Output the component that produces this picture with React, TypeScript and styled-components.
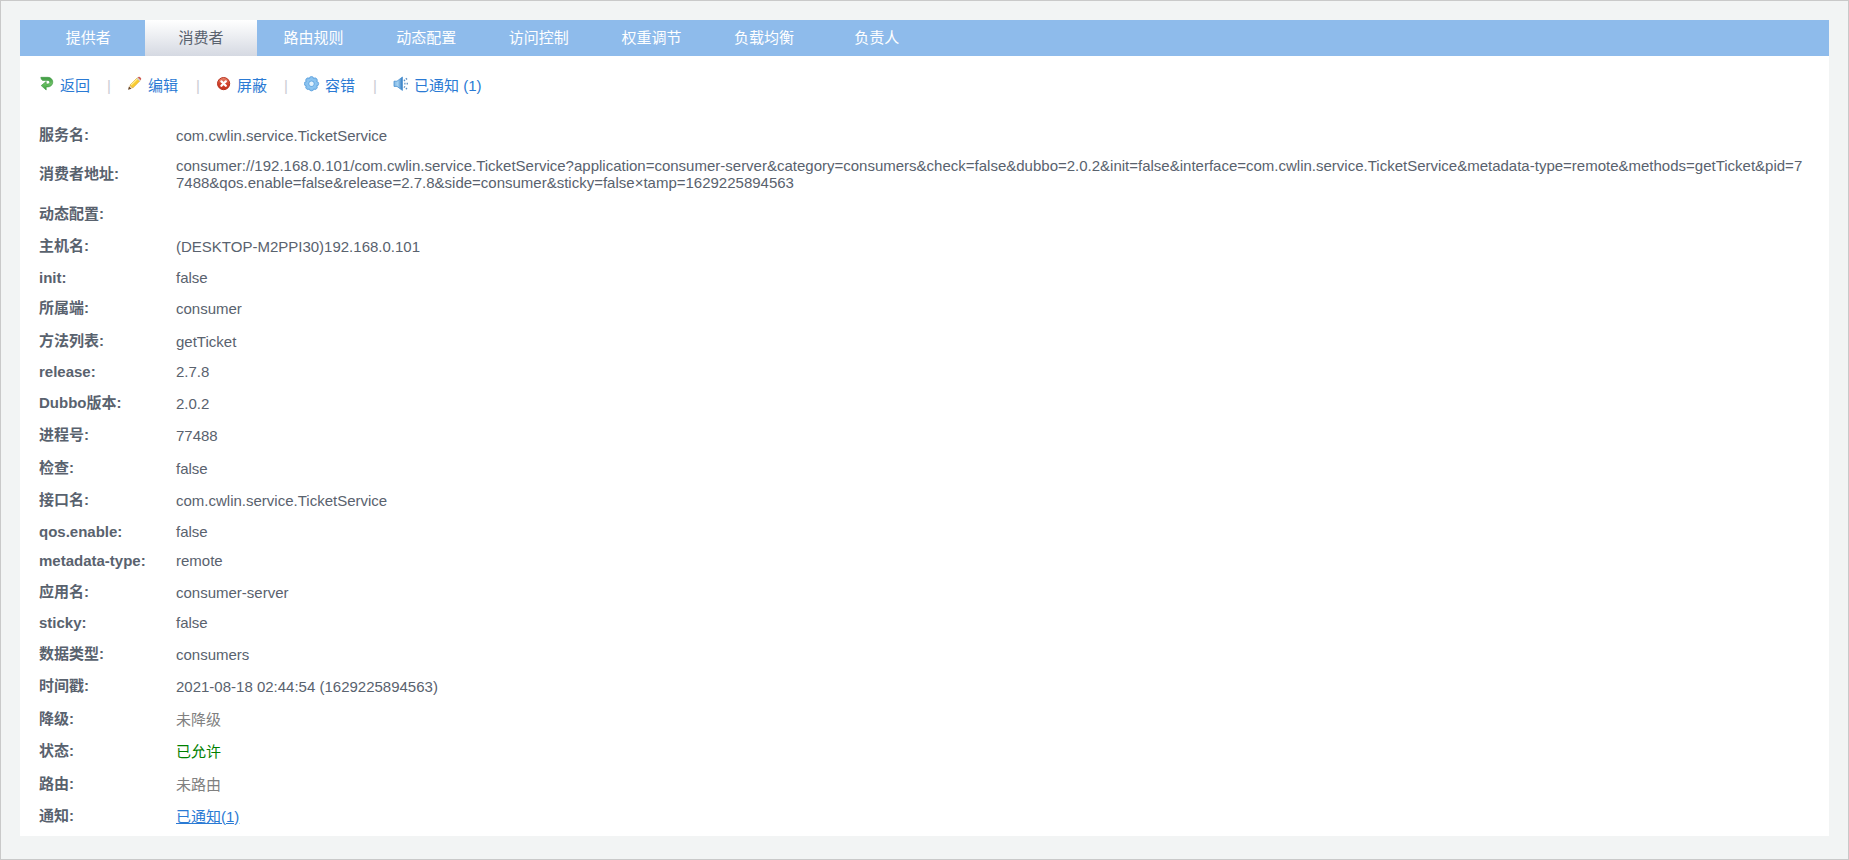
import React from "react";
import styled, { createGlobalStyle, css } from "styled-components";

const GlobalStyle = createGlobalStyle`
  *, *::before, *::after { box-sizing: border-box; }
  body {
    margin: 0;
    background: #f2f4f4;
    color: #59626e;
    font: 15px/17px "Liberation Sans", Arial, "Noto Sans CJK SC", sans-serif;
  }
`;

const Page = styled.div`
  min-height: 100vh;
  padding: 19px 19px 23px;
  border: 1px solid #c9c9c9;
`;

const Card = styled.main`
  padding-bottom: 3px;
  background: #fff;
`;

const TabBar = styled.nav`
  padding-left: 12px;
  background: #8ebbeb;
`;

const TabList = styled.ul`
  display: flex;
  max-width: 901px;
  margin: 0;
  padding: 0;
  list-style: none;
`;

const TabItem = styled.li`
  flex: 1;
`;

const TabLink = styled.a<{ $active?: boolean }>`
  display: block;
  height: 36px;
  line-height: 36px;
  text-align: center;
  text-decoration: none;
  color: #fff;
  ${(p) =>
    p.$active &&
    css`
      color: #59626e;
      background: linear-gradient(#ffffff, #d5d9e2);
    `}
`;

const Toolbar = styled.div`
  display: flex;
  align-items: center;
  padding: 20px 19px 0;
  line-height: 20px;
`;

const Action = styled.a`
  display: flex;
  align-items: flex-start;
  gap: 5px;
  color: #2a7ad4;
  text-decoration: none;

  & + &::before {
    content: "|";
    width: 4px;
    margin: 0 11px 0 17px;
    color: #cbcbd3;
  }
  &:nth-child(odd)::before {
    margin-left: 18px;
  }
`;

const Icon = styled.svg`
  width: 16px;
  height: 16px;
`;

const Details = styled.table`
  width: 100%;
  margin-top: 23px;
  border-collapse: collapse;
`;

const Row = styled.tr`
  & > * {
    padding: 6px 0;
  }
  &:nth-child(even) > * {
    padding-bottom: 7px;
  }
`;

const Label = styled.th<{ $cjk: boolean }>`
  width: 156px;
  && {
    padding-left: 19px;
  }
  text-align: left;
  line-height: ${(p) => (p.$cjk ? 20 : 17)}px;
`;

const Value = styled.td`
  && {
    padding-right: 20px;
  }
  word-break: break-all;
`;

const Status = styled.span<{ $color: string }>`
  color: ${(p) => p.$color};
`;

const NoticeLink = styled.a`
  color: #2a7ad4;
`;

const BackIcon = () => (
  <Icon viewBox="0 0 16 16" aria-hidden="true">
    <defs>
      <linearGradient id="back" x1="0" y1="0" x2="0" y2="1">
        <stop offset="0" stopColor="#3c9a41" />
        <stop offset="0.5" stopColor="#6cc064" />
        <stop offset="1" stopColor="#3c9f40" />
      </linearGradient>
    </defs>
    <path
      d="M1.8 1.3H9a4.8 4.8 0 0 1 0 9.6H7.2V14L2.2 9.6 7.2 5.4V8H9a1.8 1.8 0 0 0 0-3.6H3.6Q1.9 3.9 1.8 1.3z"
      fill="url(#back)"
      stroke="#3a953e"
      strokeWidth="0.6"
      strokeLinejoin="round"
    />
  </Icon>
);

const EditIcon = () => (
  <Icon viewBox="0 0 16 16" aria-hidden="true">
    <path d="M1 13.7 2 10.2 4.6 12.7z" fill="#6b4a2c" />
    <path d="M2 10.2 3 9l3 2.9-1.4.9z" fill="#edd2a0" />
    <path d="M3 9l7.2-7.2 2.9 2.9L5.8 12z" fill="#f9cb30" stroke="#d09a2c" strokeWidth="0.5" />
    <path d="M4 9.2l6.6-6.5" stroke="#fff09a" strokeWidth="1.1" />
    <path d="M9.7 2.3l1-1 2.9 2.9-1 1z" fill="#cfcfd4" />
    <path d="M10.7 1.3q.8-.9 1.6-.6 1.3.6 1.9 1.8.2.8-.6 1.7z" fill="#cf5a50" />
  </Icon>
);

const BlockIcon = () => (
  <Icon viewBox="0 0 16 16" aria-hidden="true">
    <defs>
      <linearGradient id="block" x1="0" y1="0" x2="0" y2="1">
        <stop offset="0" stopColor="#e98a72" />
        <stop offset="0.5" stopColor="#d2432c" />
        <stop offset="1" stopColor="#c4321e" />
      </linearGradient>
    </defs>
    <circle cx="7.6" cy="7.6" r="6.1" fill="url(#block)" stroke="#b8321f" />
    <path d="M5.4 5.4l4.4 4.4M9.8 5.4L5.4 9.8" stroke="#fff" strokeWidth="2.3" strokeLinecap="round" />
  </Icon>
);

const petals = [0, 45, 90, 135, 180, 225, 270, 315];

const GearIcon = () => (
  <Icon viewBox="0 0 16 16" aria-hidden="true">
    <g fill="#86bfed" stroke="#5a9fdd" strokeWidth="0.8">
      {petals.map((angle) => (
        <circle key={angle} cx="7.5" cy="2.7" r="2.2" transform={`rotate(${angle} 7.5 7.7)`} />
      ))}
    </g>
    <circle cx="7.5" cy="7.7" r="5.4" fill="#8cc4f0" />
    <circle cx="7.5" cy="7.7" r="2.7" fill="none" stroke="#5da2df" strokeWidth="0.9" />
    <circle cx="7.5" cy="7.7" r="2.2" fill="#e3f2fd" />
  </Icon>
);

const SpeakerIcon = () => (
  <Icon viewBox="0 0 16 16" aria-hidden="true">
    <defs>
      <linearGradient id="speaker" x1="0" y1="0" x2="1" y2="0">
        <stop offset="0" stopColor="#7fb6e4" />
        <stop offset="0.45" stopColor="#a5d2f2" />
        <stop offset="1" stopColor="#2f78c0" />
      </linearGradient>
    </defs>
    <path d="M1 5.2h3L9.4 1v13.4L4 10.4H1z" fill="url(#speaker)" stroke="#4a92d2" strokeWidth="0.8" strokeLinejoin="round" />
    <path
      d="M11 4.8l.9-.8M13 3.3l.9-.9M11.3 7.7h1.2M13.6 7.7h1.3M11 10.6l.9.8M13 12.2l.9.8"
      stroke="#5b8fc4"
      strokeWidth="1.7"
    />
  </Icon>
);

const tabs = ["提供者", "消费者", "路由规则", "动态配置", "访问控制", "权重调节", "负载均衡", "负责人"];

const actions = [
  { text: "返回", icon: <BackIcon /> },
  { text: "编辑", icon: <EditIcon /> },
  { text: "屏蔽", icon: <BlockIcon /> },
  { text: "容错", icon: <GearIcon /> },
  { text: "已通知 (1)", icon: <SpeakerIcon /> },
];

const rows: [string, React.ReactNode][] = [
  ["服务名:", "com.cwlin.service.TicketService"],
  [
    "消费者地址:",
    "consumer://192.168.0.101/com.cwlin.service.TicketService?application=consumer-server&category=consumers&check=false&dubbo=2.0.2&init=false&interface=com.cwlin.service.TicketService&metadata-type=remote&methods=getTicket&pid=77488&qos.enable=false&release=2.7.8&side=consumer&sticky=false×tamp=1629225894563",
  ],
  ["动态配置:", ""],
  ["主机名:", "(DESKTOP-M2PPI30)192.168.0.101"],
  ["init:", "false"],
  ["所属端:", "consumer"],
  ["方法列表:", "getTicket"],
  ["release:", "2.7.8"],
  ["Dubbo版本:", "2.0.2"],
  ["进程号:", "77488"],
  ["检查:", "false"],
  ["接口名:", "com.cwlin.service.TicketService"],
  ["qos.enable:", "false"],
  ["metadata-type:", "remote"],
  ["应用名:", "consumer-server"],
  ["sticky:", "false"],
  ["数据类型:", "consumers"],
  ["时间戳:", "2021-08-18 02:44:54 (1629225894563)"],
  ["降级:", <Status $color="#808080">未降级</Status>],
  ["状态:", <Status $color="#008000">已允许</Status>],
  ["路由:", <Status $color="#808080">未路由</Status>],
  ["通知:", <NoticeLink href="#notified">已通知(1)</NoticeLink>],
];

const hasCjk = (text: string) => /[\u4e00-\u9fff]/.test(text);

export default function App() {
  return (
    <>
      <GlobalStyle />
      <Page>
        <Card>
          <TabBar>
            <TabList>
              {tabs.map((tab) => (
                <TabItem key={tab}>
                  <TabLink href="#" $active={tab === "消费者"}>
                    {tab}
                  </TabLink>
                </TabItem>
              ))}
            </TabList>
          </TabBar>
          <Toolbar>
            {actions.map(({ text, icon }) => (
              <Action key={text} href="#">
                {icon}
                {text}
              </Action>
            ))}
          </Toolbar>
          <Details>
            <tbody>
              {rows.map(([label, value]) => (
                <Row key={label}>
                  <Label scope="row" $cjk={hasCjk(label)}>
                    {label}
                  </Label>
                  <Value>{value}</Value>
                </Row>
              ))}
            </tbody>
          </Details>
        </Card>
      </Page>
    </>
  );
}
